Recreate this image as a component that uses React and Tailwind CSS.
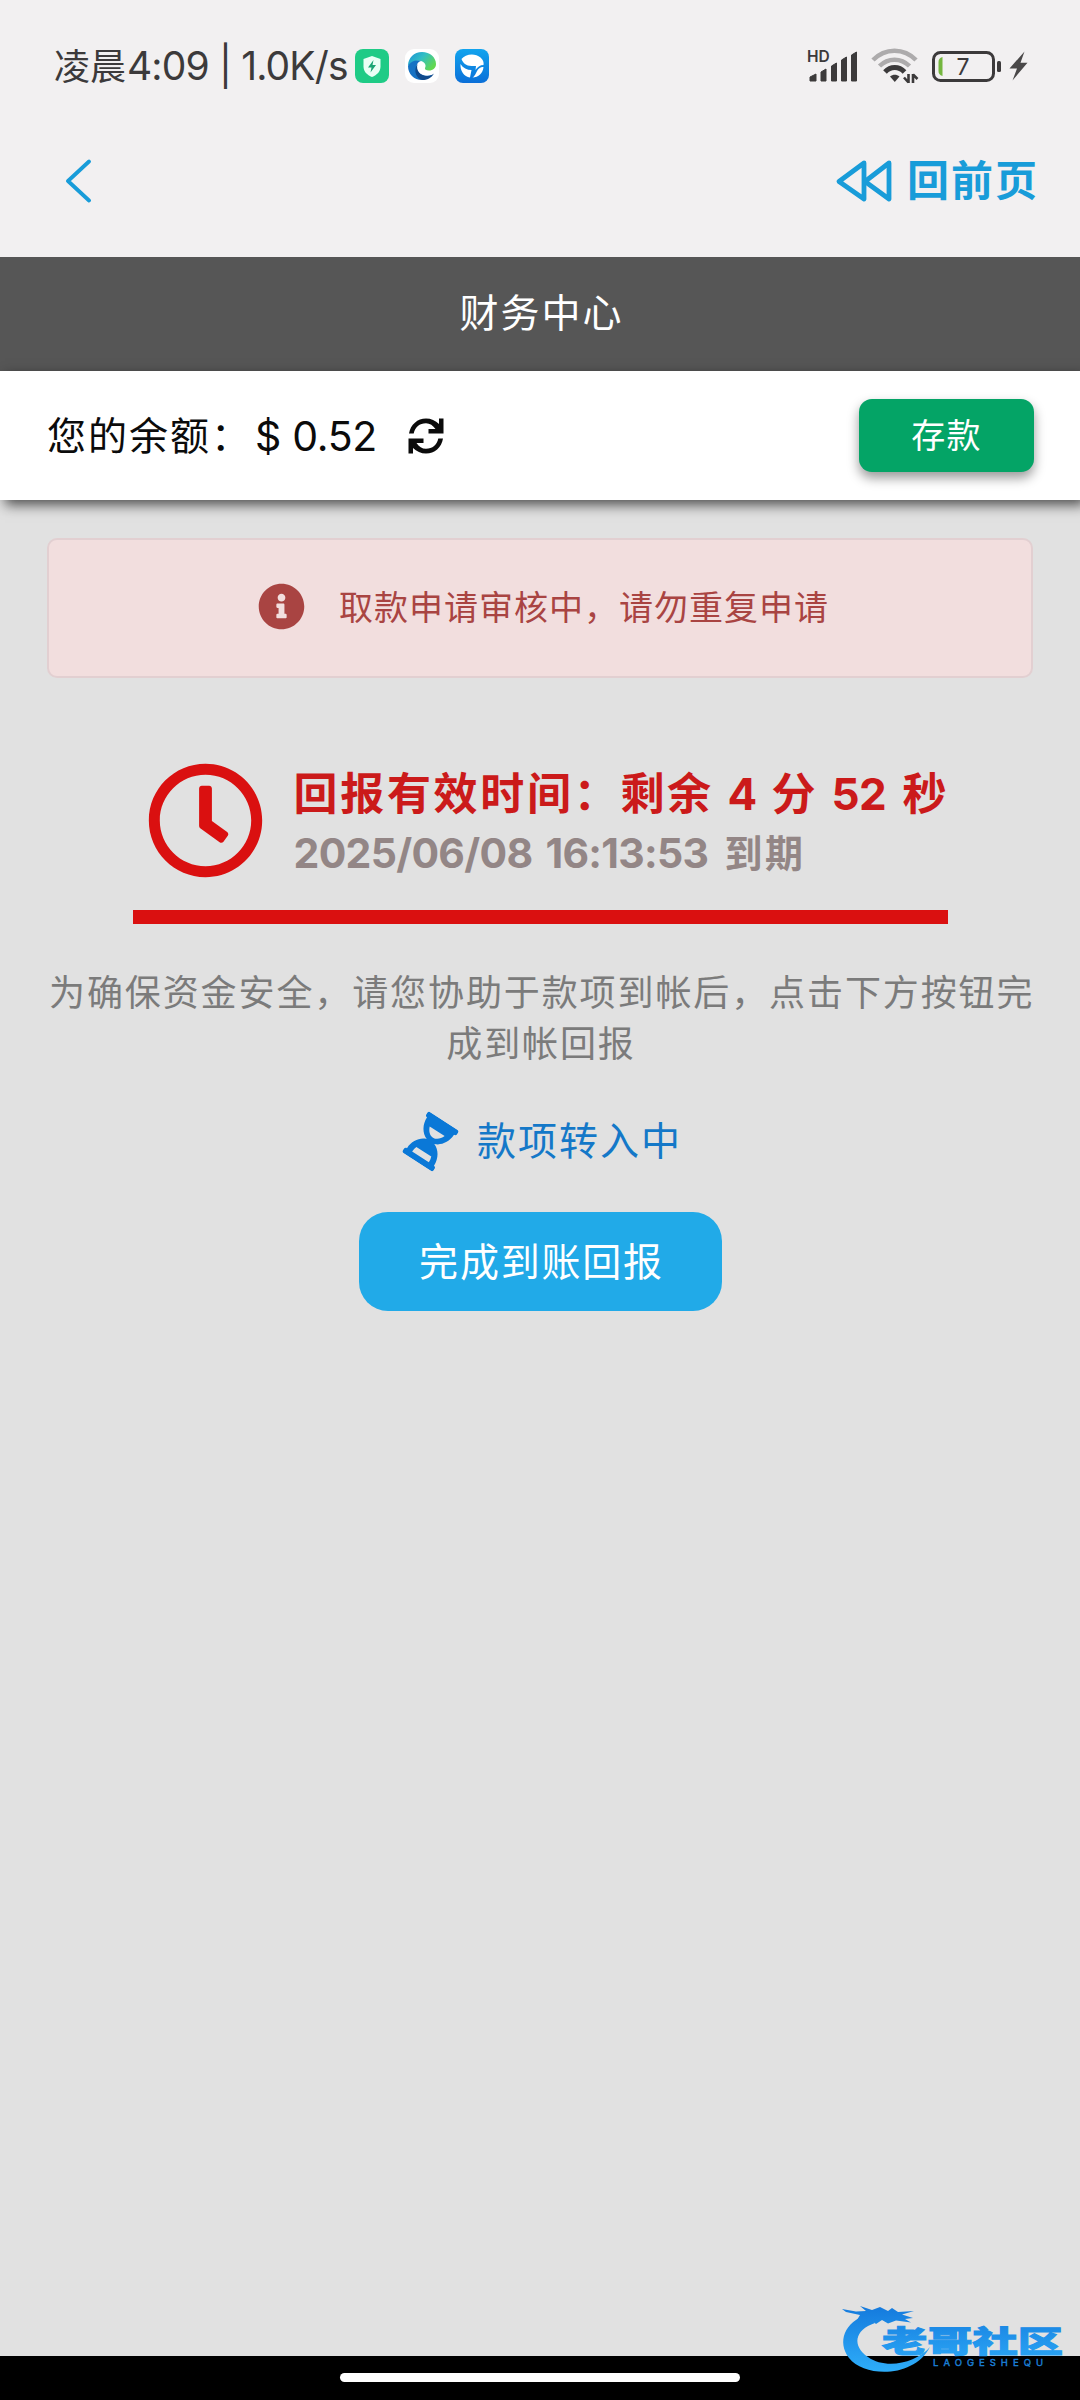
import { FaHourglassHalf, FaInfoCircle, FaRegClock } from 'react-icons/fa'

function ShieldBadge() {
  return (
    <svg viewBox="0 0 34 34" className="w-[34px] h-[34px]">
      <rect width="34" height="34" rx="8" fill="#1fcb86" />
      <path d="M17 7 L25.5 10 V17.5 C25.5 22.5 22 26 17 28 C12 26 8.500 22.500 8.500 17.500 V10 Z" fill="#e9fff5" />
      <path d="M18.500 11 L13 18.500 H16.500 L15.500 23.500 L21 16 H17.500 Z" fill="#1aa574" />
    </svg>
  )
}

function EdgeBadge() {
  return (
    <svg viewBox="0 0 34 34" className="w-[34px] h-[34px]">
      <defs>
        <linearGradient id="edgeTop" x1="0" y1="0" x2="1" y2="0.6">
          <stop offset="0" stopColor="#1a8fd8" />
          <stop offset="0.5" stopColor="#31bfc4" />
          <stop offset="1" stopColor="#63d850" />
        </linearGradient>
      </defs>
      <rect width="34" height="34" rx="9" fill="#fff" />
      <path d="M3 17 C3 9 9 3 17 3 C25 3 31 8.500 31 15 C31 19 28 21.500 24 21.500 C21 21.500 19.500 20.500 20 19 C21.500 16.500 20 13 16 12 C11 11 6 13 3 17 Z" fill="url(#edgeTop)" />
      <path d="M3 17 C5 12.500 11 10.500 16 12 C12 13 11 17 12 20.500 C14 26 20 28 27 26 C24 30 20 31 17 31 C9 31 3 25 3 17 Z" fill="#1672c4" />
      <path d="M12.500 15 C10.500 22 16 27.500 23 27 C25.500 26.800 28 25.500 29 24.500 C26.500 29 22 31 17.500 31 C11 30 8 21 12.500 15 Z" fill="#0f4a8c" />
    </svg>
  )
}

function BirdBadge() {
  return (
    <svg viewBox="0 0 34 34" className="w-[34px] h-[34px]">
      <defs>
        <linearGradient id="birdBg" x1="0" y1="0" x2="0" y2="1">
          <stop offset="0" stopColor="#12a4ee" />
          <stop offset="1" stopColor="#0b6fd8" />
        </linearGradient>
      </defs>
      <rect width="34" height="34" rx="8" fill="url(#birdBg)" />
      <path d="M6.500 10 C10 5 20 3.500 25.500 8.500 C28 11 29 13 28.500 16 C25 16 22.500 18 20.500 21 L21 17 H16.500 C11 17 8 14 6.500 10 Z" fill="#fff" />
      <path d="M5.500 15 C8 19 12 21 16.500 21 L15 28.500 C9 27.500 5 22 5.500 15 Z" fill="#fff" />
      <path d="M28.500 18 C28 24 23.500 28.500 17.500 28.500 C21 26.500 21 22 24 19.500 C25.500 18.300 27 18 28.500 18 Z" fill="#fff" />
    </svg>
  )
}

function SignalIcon() {
  return (
    <svg viewBox="0 0 50 34" className="w-[50px] h-[34px] overflow-visible" fill="#3c3a3b">
      <text x="-1" y="12.500" fontSize="15.500" fontWeight="600" fontFamily="Inter, sans-serif">HD</text>
      <path d="M2 32 V28 L8 25 V32 Z" stroke="#3c3a3b" strokeLinejoin="round" />
      <path d="M13 32 V23 L18 20 V32 Z" stroke="#3c3a3b" strokeLinejoin="round" />
      <path d="M23.500 32 V17 L28.500 14 V32 Z" stroke="#3c3a3b" strokeLinejoin="round" />
      <path d="M33.500 32 V11 L38.500 8 V32 Z" stroke="#3c3a3b" strokeLinejoin="round" />
      <path d="M43.500 32 V6 L48.500 3 V32 Z" stroke="#3c3a3b" strokeLinejoin="round" />
    </svg>
  )
}

function WifiIcon() {
  return (
    <svg viewBox="0 0 48 36" className="w-[48px] h-[36px]" fill="none">
      <path d="M2 12 C14 -0.500 33 -0.500 45 12" stroke="#adabac" strokeWidth="4.500" />
      <path d="M8.500 18 C17 9.500 30 9.500 38.500 18" stroke="#adabac" strokeWidth="4.500" />
      <path d="M14 24 C19.500 18 28 18 33.500 24" stroke="#3c3a3b" strokeWidth="5" />
      <path d="M19 28.500 C22 26 25.500 26 28.500 28.500 L23.800 34 Z" fill="#3c3a3b" />
      <path d="M37.500 26 V35 M37.500 34.500 L33 29.500 M42 35 V26 M42 26.500 L46.500 31" stroke="#3c3a3b" strokeWidth="2.600" />
    </svg>
  )
}

function BatteryIcon() {
  return (
    <svg viewBox="0 0 70 31" className="w-[70px] h-[31px]">
      <rect x="1.500" y="1.500" width="60" height="28" rx="7" fill="none" stroke="#3c3a3b" strokeWidth="3" />
      <path d="M10.500 6 V25 C7.500 24 6.500 22.500 6.500 20 V11 C6.500 8.500 7.500 7 10.500 6 Z" fill="#74b63f" />
      <text x="31" y="23.800" textAnchor="middle" fontSize="23" fontFamily="Inter, sans-serif" fill="#3c3a3b">7</text>
      <rect x="65" y="10" width="4" height="11" rx="1.500" fill="#3c3a3b" />
    </svg>
  )
}

function RefreshIcon() {
  return (
    <svg viewBox="0 0 36 36" className="w-[36px] h-[36px]" fill="currentColor">
      <path d="M1 15.500 C2.500 6.500 9.500 0.500 18 0.500 C23 0.500 27.500 2.500 31 6 V0.500 H35.500 V15.500 H20.500 V11 H27.500 C25 7.500 22 5.200 18 5.200 C11.500 5.200 7 9 5.700 15.500 Z" />
      <path d="M35 20.500 C33.500 29.500 26.500 35.500 18 35.500 C13 35.500 8.500 33.500 5 30 V35.500 H0.500 V20.500 H15.500 V25 H8.500 C11 28.500 14 30.800 18 30.800 C24.500 30.800 29 27 30.300 20.500 Z" />
    </svg>
  )
}

function StatusBar() {
  return (
    <div className="h-[132px] pl-[54px] pr-[52px] flex items-center justify-between text-[#3c3a3b]">
      <div className="flex items-center">
        <span className="text-[36px] leading-[50px] w-[73px] whitespace-nowrap pt-[2px]">凌晨</span>
        <span className="text-[39px] leading-[50px] w-[228px] whitespace-nowrap tracking-[-0.85px]">4:09 | 1.0K/s</span>
        <div className="flex gap-[16px]">
          <ShieldBadge />
          <EdgeBadge />
          <BirdBadge />
        </div>
      </div>
      <div className="flex items-center">
        <SignalIcon />
        <span className="w-[13px]" />
        <WifiIcon />
        <span className="w-[13px]" />
        <BatteryIcon />
        <svg viewBox="0 0 19 30" className="w-[19px] h-[30px] ml-[7px]">
          <path d="M15.500 0.500 L0.500 17.500 H8 L3.500 29.500 L18.500 11.800 H11.500 Z" fill="#4a4849" />
        </svg>
      </div>
    </div>
  )
}

function NavBar() {
  return (
    <div className="h-[98px] pl-[64px] pr-[41px] flex items-center justify-between text-[#189cd9]">
      <svg viewBox="0 0 28 44" className="w-[28px] h-[44px]" fill="none" stroke="currentColor" strokeWidth="3.800">
        <path d="M25 2.500 L4 22 L25 41.500" strokeLinecap="round" strokeLinejoin="round" />
      </svg>
      <div className="flex items-center gap-[14px]">
        <svg viewBox="0 0 58 44" className="w-[58px] h-[44px]" fill="none" stroke="currentColor" strokeWidth="4.800" strokeLinejoin="round">
          <path d="M29 4 L4 22.500 L29 40 Z" />
          <path d="M54 4 L30 22.500 L54 40 Z" />
        </svg>
        <span className="text-[42px] leading-[44px] font-bold tracking-[2px]">回前页</span>
      </div>
    </div>
  )
}

function BalanceBar() {
  return (
    <div className="h-[129px] pl-[47px] pr-[46px] bg-white flex items-center justify-between shadow-[5px_5px_12px_rgba(0,0,0,0.65)] relative">
      <div className="flex items-center text-[#0b0b0b]">
        <span className="text-[39px] leading-[44px] tracking-[2px] w-[208px]">您的余额：</span>
        <span className="text-[41px] leading-[44px] w-[153px] whitespace-nowrap tracking-[-0.3px]">$ 0.52</span>
        <RefreshIcon />
      </div>
      <button type="button" className="w-[175px] h-[73px] rounded-[13px] bg-[#04a466] text-white text-[34px] leading-[40px] tracking-[1.3px] shadow-[0_6px_12px_rgba(0,0,0,0.4)]">
        存款
      </button>
    </div>
  )
}

function Countdown() {
  return (
    <div className="mt-[76px] mx-auto w-[815px] h-[170px] border-b-[14px] border-[#da1010] flex">
      <FaRegClock className="w-[117px] h-[117px] mt-[8px] ml-[14px] text-[#da1010] shrink-0" />
      <div className="ml-[30px] pt-[12px] font-bold whitespace-nowrap">
        <div className="flex text-[44px] leading-[56px] text-[#cb1a1a] tracking-[2.700px]">
          <span className="w-[434px]">回报有效时间：剩余</span>
          <span className="w-[44px]">4</span>
          <span className="w-[60px]">分</span>
          <span className="w-[71px] tracking-[-0.5px]">52</span>
          <span>秒</span>
        </div>
        <div className="flex text-[#938686] leading-[62px]">
          <span className="w-[431px] text-[41px] tracking-[-0.7px] [word-spacing:4px]">2025/06/08 16:13:53</span>
          <span className="text-[38px] tracking-[2.500px]">到期</span>
        </div>
      </div>
    </div>
  )
}

function ForumMark() {
  return (
    <svg viewBox="0 0 260 120" className="absolute right-0 bottom-0 w-[260px] h-[120px]">
      <defs>
        <linearGradient id="markFill" x1="0" y1="25" x2="0" y2="95" gradientUnits="userSpaceOnUse">
          <stop offset="0" stopColor="#1479dc" />
          <stop offset="1" stopColor="#2fb0fb" />
        </linearGradient>
      </defs>
      {/* dragon ring */}
      <path d="M48 34 C24 42 17 62 29 78 C45 98 94 98 110 67 C96 83 66 90 48 77 C32 66 34 50 55 43 Z" fill="url(#markFill)" />
      <path d="M22 29 L36 31.500 L46 31 L40 26 L52 30 L60 27 L68 31 L72 28 L78 32 L94 31 L82 34.500 L93 38 L85 39 L91 42.500 L76 40.500 L68 43.500 L62 40 L56 44 L50 39 L42 41 L34 45 L40 35 L26 32 Z" fill="url(#markFill)" />
      <text x="62" y="72" fontSize="30" fontWeight="900" textLength="181" lengthAdjust="spacingAndGlyphs" fontFamily="'Noto Sans CJK SC', sans-serif" fill="url(#markFill)" stroke="url(#markFill)" strokeWidth="1">老哥社区</text>
      <text x="113" y="86" fontSize="9.500" textLength="110" fontFamily="Inter, sans-serif" fill="#1b7fd6" stroke="#1b7fd6" strokeWidth="0.400">LAOGESHEQU</text>
    </svg>
  )
}

export default function App() {
  return (
    <div className="w-[1080px] h-[2400px] flex flex-col overflow-hidden relative bg-[#e1e1e1] font-['Inter','Noto_Sans_CJK_SC',sans-serif]">
      <header className="h-[257px] bg-[#f2f0f1] shrink-0">
        <StatusBar />
        <NavBar />
      </header>

      <h1 className="h-[114px] shrink-0 bg-[#565656] text-white text-[39px] leading-[112px] text-center tracking-[2px] pl-[3px]">财务中心</h1>
      <BalanceBar />

      <main className="flex-1 px-[47px] pt-[38px] flex flex-col">
        <div className="h-[140px] rounded-[10px] border-2 border-[#e2cfd1] bg-[#f2dede] text-[#a94442] flex items-center pl-[209px]">
          <FaInfoCircle className="w-[47px] h-[47px] mb-[3px]" />
          <span className="ml-[34px] text-[34px] leading-[40px] tracking-[1px] whitespace-nowrap">取款申请审核中，请勿重复申请</span>
        </div>

        <Countdown />

        <p className="mt-[44px] pl-[2px] text-[36px] leading-[51px] tracking-[1.900px] text-[#7b7b7b] text-center whitespace-nowrap">
          为确保资金安全，请您协助于款项到帐后，点击下方按钮完<br />成到帐回报
        </p>

        <div className="mt-[41px] pl-[14px] h-[60px] flex items-center justify-center text-[#1478c8]">
          <FaHourglassHalf className="w-[37px] h-[49px] rotate-[213deg] text-[#0a78d7]" />
          <span className="ml-[28px] text-[39px] leading-[44px] tracking-[2px]">款项转入中</span>
        </div>

        <button type="button" className="mt-[41px] mx-auto w-[363px] h-[99px] rounded-[29px] bg-[#21aae8] text-white text-[39px] leading-[44px] tracking-[1.800px] pl-[3px]">
          完成到账回报
        </button>
      </main>

      <footer className="h-[44px] bg-black shrink-0 flex justify-center pt-[17px]">
        <div className="w-[400px] h-[9px] rounded-full bg-white" />
      </footer>
      <ForumMark />
    </div>
  )
}
